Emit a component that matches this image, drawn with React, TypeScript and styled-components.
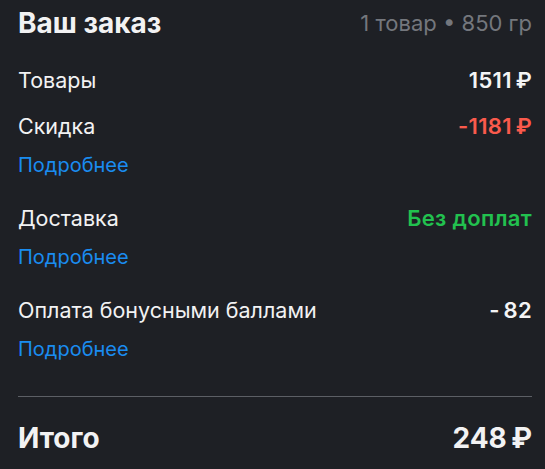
import { createGlobalStyle, styled } from "styled-components";

const GlobalStyle = createGlobalStyle`
    html, body {
        margin: 0;
        padding: 0;
        background: #1e2025;
    }
    body {
        font-family: Inter, Roboto, "Liberation Sans", sans-serif;
        color: #f2f2f3;
    }
`;

const Wrapper = styled.div`
    width: 545px;
    height: 469px;
    box-sizing: border-box;
    padding: 0 13px 0 18px;
    display: flex;
    flex-direction: column;
    overflow: hidden;
`;

const Header = styled.div`
    height: 46px;
    display: flex;
    align-items: center;
    justify-content: space-between;
`;

const Title = styled.h1`
    margin: 0;
    font-size: 28px;
    font-weight: 700;
    line-height: 46px;
`;

const Meta = styled.span`
    font-size: 22px;
    color: #74777d;
`;

const Item = styled.div<{ $gap: number }>`
    margin-top: ${(p) => p.$gap}px;
    display: flex;
    flex-direction: column;
`;

const Row = styled.div`
    height: 28px;
    display: flex;
    align-items: center;
    justify-content: space-between;
    font-size: 21.5px;
`;

const Value = styled.span<{ $tone?: "red" | "green" }>`
    font-size: 22px;
    font-weight: 600;
    letter-spacing: 0.3px;
    color: ${(p) => (p.$tone === "red" ? "#fa5a4c" : p.$tone === "green" ? "#22c14f" : "#f4f4f5")};
`;

const More = styled.a`
    margin-top: 13px;
    line-height: 24px;
    font-size: 20px;
    color: #1a8cf0;
    text-decoration: none;
    cursor: pointer;
    align-self: flex-start;
`;

const Divider = styled.hr`
    margin: 35px 0 0 0;
    border: none;
    height: 1px;
    background: #5c5f65;
`;

const Total = styled.div`
    margin-top: 21px;
    height: 40px;
    display: flex;
    align-items: center;
    justify-content: space-between;
    font-size: 28px;
    font-weight: 700;
`;

type Line = {
    label: string;
    value: string;
    tone?: "red" | "green";
    more?: boolean;
    gap: number;
};

const lines: Line[] = [
    { label: "Товары", value: "1511\u2009₽", gap: 20 },
    { label: "Скидка", value: "-1181\u2009₽", tone: "red", more: true, gap: 18 },
    { label: "Доставка", value: "Без доплат", tone: "green", more: true, gap: 27 },
    { label: "Оплата бонусными баллами", value: "-\u200982", more: true, gap: 27 },
];

export default function App() {
    return (
        <>
            <GlobalStyle />
            <Wrapper>
                <Header>
                    <Title>Ваш заказ</Title>
                    <Meta>1 товар • 850 гр</Meta>
                </Header>
                {lines.map((l) => (
                    <Item key={l.label} $gap={l.gap}>
                        <Row>
                            <span>{l.label}</span>
                            <Value $tone={l.tone}>{l.value}</Value>
                        </Row>
                        {l.more ? <More>Подробнее</More> : null}
                    </Item>
                ))}
                <Divider />
                <Total>
                    <span>Итого</span>
                    <span>248&#8201;₽</span>
                </Total>
            </Wrapper>
        </>
    );
}
